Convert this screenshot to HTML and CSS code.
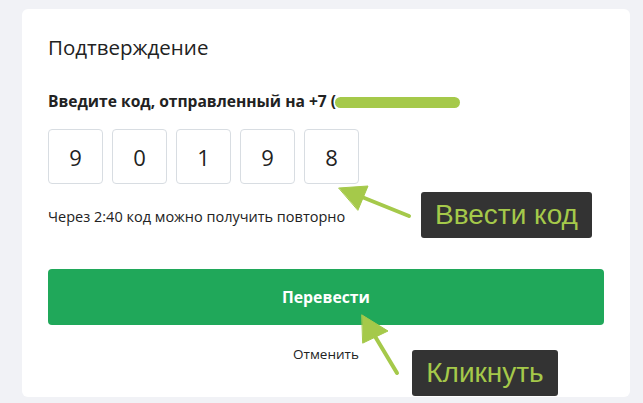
FILE: index.html
```html
<!DOCTYPE html>
<html lang="ru">
<head>
    <meta charset="UTF-8">
    <meta name="viewport" content="width=device-width, initial-scale=1.0">
    <title>Подтверждение</title>
    <link rel="stylesheet" href="styles.css">
</head>
<body>
    <div class="card">
        <h2 class="title">Подтверждение</h2>
        <p class="subtitle">Введите код, отправленный на +7 (<span class="hidden-phone"></span></p>
        <div class="code">
            <div class="digit">9</div>
            <div class="digit">0</div>
            <div class="digit">1</div>
            <div class="digit">9</div>
            <div class="digit">8</div>
        </div>
        <p class="timer">Через 2:40 код можно получить повторно</p>
        <button class="btn">Перевести</button>
        <div class="cancel">Отменить</div>
    </div>

    <svg class="arrows" width="643" height="403" viewBox="0 0 643 403">
        <g fill="#a5c94a" stroke="#a5c94a" stroke-linecap="round" stroke-linejoin="round">
            <line x1="409" y1="216" x2="352" y2="193" stroke-width="4"/>
            <polygon points="339,188 368,186 358,210" stroke-width="1"/>
            <line x1="397" y1="373" x2="370" y2="328" stroke-width="4"/>
            <polygon points="362,315 388,331 363,343" stroke-width="1"/>
        </g>
    </svg>
    <div class="note note-code">Ввести код</div>
    <div class="note note-click">Кликнуть</div>
</body>
</html>
```

FILE: styles.css
```css
body {
    margin: 0;
    padding: 9px 0 0 22px;
    background: #f1f2f6;
    font-family: 'Open Sans', sans-serif;
    color: #222;
    height: 403px;
    box-sizing: border-box;
    overflow: hidden;
}
.card {
    width: 608px;
    height: 388px;
    box-sizing: border-box;
    background: #fff;
    border-radius: 6px;
    padding: 24px 26px 0;
}
.title {
    margin: 0;
    font-size: 20.5px;
    font-weight: 500;
    line-height: 28px;
}
.subtitle {
    margin: 30px 0 0;
    font-size: 15.6px;
    font-weight: 700;
    line-height: 20px;
}
.hidden-phone {
    display: inline-block;
    width: 125px;
    height: 11px;
    margin-left: -1px;
    vertical-align: -1px;
    border-radius: 6px;
    background: #a5c94a;
}
.code {
    display: flex;
    gap: 9px;
    margin-top: 18px;
}
.digit {
    width: 55px;
    height: 55px;
    box-sizing: border-box;
    border: 1px solid #d8dde2;
    border-radius: 4px;
    display: flex;
    align-items: center;
    justify-content: center;
    font-size: 22px;
}
.timer {
    margin: 24px 0 0;
    font-size: 14.5px;
    line-height: 18px;
}
.btn {
    display: block;
    width: 100%;
    height: 56px;
    margin-top: 43px;
    border: none;
    border-radius: 4px;
    background: #20a85a;
    color: #fff;
    font-family: 'Open Sans', sans-serif;
    font-size: 15.8px;
    font-weight: 700;
}
.cancel {
    margin-top: 20px;
    text-align: center;
    font-size: 13.5px;
    line-height: 18px;
}
.arrows {
    position: absolute;
    left: 0;
    top: 0;
}
.note {
    position: absolute;
    background: #333;
    color: #a5c94a;
    border-radius: 3px;
    font-family: 'Liberation Sans', Arial, sans-serif;
    font-size: 28px;
    display: flex;
    align-items: center;
    justify-content: center;
}
.note-code {
    left: 421px;
    top: 192px;
    width: 171px;
    height: 46px;
}
.note-click {
    left: 412px;
    top: 350px;
    width: 146px;
    height: 46px;
}
```
